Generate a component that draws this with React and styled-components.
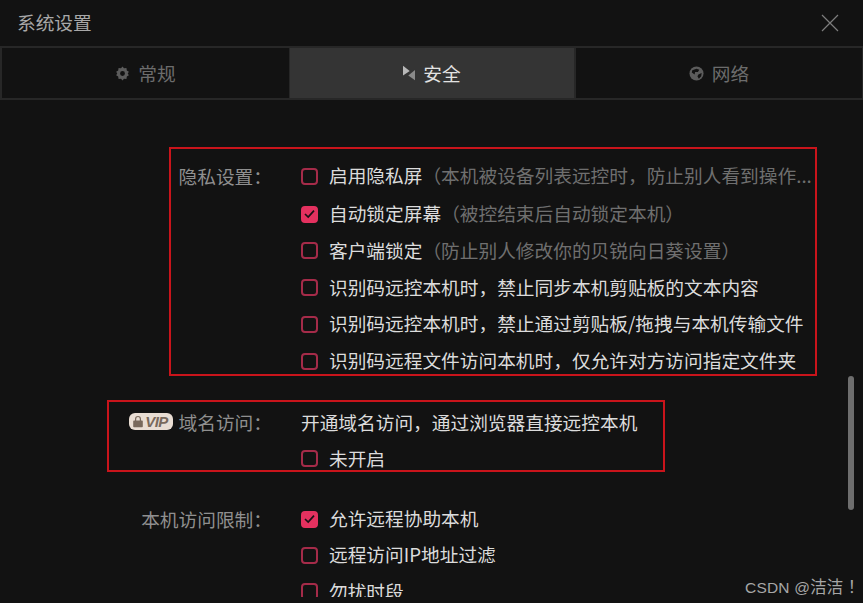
import React from "react";
import styled, { createGlobalStyle } from "styled-components";

const Global = createGlobalStyle`
  html, body { margin: 0; padding: 0; background: #121212; }
  body { font-family: "Noto Sans CJK SC", "Liberation Sans", sans-serif; }
`;
const Page = styled.div`
  position: relative; width: 863px; height: 603px; overflow: hidden; background: #121212;
  font-size: 18.7px; line-height: 26px; color: #d6d6d6;
`;
const Header = styled.header`
  display: flex; align-items: center; justify-content: space-between;
  height: 46px; padding: 0 24px 0 17px; box-sizing: border-box;
`;
const Title = styled.h1`
  margin: 0; font-size: 18.7px; font-weight: 400; color: #a8a8a8; line-height: 26px; position: relative; top: -1px;
`;
const CloseIcon = styled.svg`
  width: 18px; height: 18px; display: block;
`;
const Tabs = styled.nav`
  display: grid; grid-template-columns: 287px 287px 1fr;
  height: 54px; box-sizing: border-box; border: 2px solid #272727;
  border-right-width: 1px;
`;
const Tab = styled.div`
  display: flex; align-items: center; justify-content: center; gap: 8px;
  background: ${p => (p.$active ? "#343434" : "#121212")};
  color: ${p => (p.$active ? "#e2e2e2" : "#6c6c6c")};
  border-left: ${p => (p.$active ? "1px solid #272727" : "none")};
  border-right: ${p => (p.$active ? "2px solid #272727" : "none")};
  svg { display: block; }
`;
const Content = styled.main`
  display: flex; flex-direction: column; padding-top: 47px; align-items: flex-start;
  height: 497px; box-sizing: border-box; overflow: hidden;
`;
const Section = styled.section`
  flex: none;
  display: grid; grid-template-columns: ${p => p.$labelWidth}px 1fr; box-sizing: border-box;
  margin-left: ${p => p.$left}px; width: ${p => p.$width}px; height: ${p => p.$height}px;
  padding-top: ${p => p.$pad}px; margin-bottom: ${p => p.$gap || 0}px;
  border: 2px solid ${p => (p.$marked ? "#c9141b" : "transparent")};
`;
const Label = styled.div`
  display: flex; align-items: center; justify-content: flex-end; gap: 6px; height: 26px;
  padding-right: 29px;
  color: #8f8f8f; white-space: nowrap;
`;
const Rows = styled.div`
  display: flex; flex-direction: column;
`;
const Row = styled.div`
  display: flex; align-items: center; height: 26px; margin-bottom: ${p => p.$mb ?? 10.8}px;
  white-space: nowrap;
`;
const Box = styled.span`
  flex: none; width: 17px; height: 17px; box-sizing: border-box; border-radius: 4px;
  border: 2px solid ${p => (p.$checked ? "#e4315f" : "#a52b49")}; margin-right: 11px;
  background: ${p => (p.$checked ? "#e4315f" : "transparent")};
  display: flex; align-items: center; justify-content: center;
`;
const RowBody = styled.span`
  position: relative; top: -1px; display: block;
`;
const RowText = styled.span`
  color: #dcdcdc;
`;
const Hint = styled.span`
  color: #6f6f6f;
`;
const Plain = styled.div`
  height: 26px; margin-bottom: 10.5px; color: #dcdcdc; white-space: nowrap;
`;
const VipBadge = styled.span`
  display: inline-flex; align-items: center; justify-content: center; gap: 2px;
  width: 44px; height: 17px; border-radius: 6px; background: #e9ddd3; color: #79695c;
  font: italic 700 15px/17px "Liberation Sans", sans-serif; letter-spacing: -0.6px;
  position: relative; top: -1px;
`;
const Scrollbar = styled.div`
  position: absolute; left: 848px; top: 376px; width: 6px; height: 134px; border-radius: 3px; background: #6e6e6e;
`;
const Watermark = styled.div`
  position: absolute; left: 745px; top: 575px; font-size: 15.5px; line-height: 24px; color: #a6a6a6;
  font-family: "Liberation Sans", "Noto Sans CJK SC", sans-serif; white-space: nowrap; letter-spacing: 0.2px;
`;
const WatermarkCjk = styled.span`
  font-size: 16.5px; letter-spacing: 0;
`;

const Check = () => (
  <svg width="11" height="10" viewBox="0 0 11 10" fill="none">
    <path d="M1 5 L4.2 8 L10 1.6" stroke="#1a1015" strokeWidth="1.7" />
  </svg>
);
const CheckRow = ({ checked, text, hint, mb }) => (
  <Row $mb={mb}>
    <Box $checked={checked}>{checked && <Check />}</Box>
    <RowBody>
      <RowText>{text}</RowText>
      {hint && <Hint>{hint}</Hint>}
    </RowBody>
  </Row>
);

const Gear = () => (
  <svg width="15" height="15" viewBox="0 0 16 16" fill="#5c5c5c">
    <path fillRule="evenodd" d="M8 .5l1.6 1.9 2.6-.2.4 2.5 2.2 1.4L13.6 8l1.2 1.9-2.2 1.4-.4 2.5-2.6-.2L8 15.5l-1.6-1.9-2.6.2-.4-2.5-2.2-1.4L2.4 8 1.2 6.1l2.2-1.4.4-2.5 2.6.2zM8 5.4a2.6 2.6 0 100 5.2 2.6 2.6 0 000-5.2z" />
  </svg>
);
const Shield = () => (
  <svg width="12" height="16" viewBox="0 0 12.5 16">
    <path d="M0 0.5 L7 6 L0 10.5z" fill="#b8b8b8" />
    <path d="M12.5 5 L12.5 15.5 L5.5 10.5z" fill="#8a8a8a" />
  </svg>
);
const Globe = () => (
  <svg width="15" height="15" viewBox="0 0 16 16">
    <circle cx="8" cy="8" r="7.5" fill="#5c5c5c" />
    <path d="M3.5 4.5 L8 2.8 L11 4 L9.5 6.5 L6.5 6.5 L6 9 L3 7z M10 9 L13.5 7.5 L13 11 L10.5 13.5 L9 11z" fill="#121212" />
  </svg>
);
const Lock = () => (
  <svg width="10" height="13" viewBox="0 0 10 12" fill="#79695c">
    <path fillRule="evenodd" d="M1 5h1V3.4a3 3 0 016 0V5h1a.8.8 0 01.8.8v5.2a.8.8 0 01-.8.8H1a.8.8 0 01-.8-.8V5.8A.8.8 0 011 5zm2.2 0h3.6V3.4a1.8 1.8 0 00-3.6 0z" />
  </svg>
);

export default function App() {
  return (
    <Page>
      <Global />
      <Header>
        <Title>系统设置</Title>
        <CloseIcon viewBox="0 0 18 18" fill="none">
          <path d="M1 1 L17 17 M17 1 L1 17" stroke="#7d7d7d" strokeWidth="1.2" />
        </CloseIcon>
      </Header>
      <Tabs>
        <Tab><Gear />常规</Tab>
        <Tab $active><Shield />安全</Tab>
        <Tab><Globe />网络</Tab>
      </Tabs>
      <Content>
        <Section $marked $left={169} $width={648} $height={229} $labelWidth={130} $pad={14} $gap={24}>
          <Label>隐私设置：</Label>
          <Rows>
            <CheckRow mb={12} text="启用隐私屏" hint="（本机被设备列表远控时，防止别人看到操作..." />
            <CheckRow checked text="自动锁定屏幕" hint="（被控结束后自动锁定本机）" />
            <CheckRow text="客户端锁定" hint="（防止别人修改你的贝锐向日葵设置）" />
            <CheckRow text="识别码远控本机时，禁止同步本机剪贴板的文本内容" />
            <CheckRow text="识别码远控本机时，禁止通过剪贴板/拖拽与本机传输文件" />
            <CheckRow text="识别码远程文件访问本机时，仅允许对方访问指定文件夹" />
          </Rows>
        </Section>
        <Section $marked $left={107} $width={558} $height={72} $labelWidth={192} $pad={7} $gap={32}>
          <Label><VipBadge><Lock />VIP</VipBadge>域名访问：</Label>
          <Rows>
            <Plain>开通域名访问，通过浏览器直接远控本机</Plain>
            <CheckRow text="未开启" mb={0} />
          </Rows>
        </Section>
        <Section $left={107} $width={720} $height={125} $labelWidth={192} $pad={0}>
          <Label>本机访问限制：</Label>
          <Rows>
            <CheckRow checked mb={10.4} text="允许远程协助本机" />
            <CheckRow mb={10.4} text="远程访问IP地址过滤" />
            <CheckRow text="勿扰时段" />
          </Rows>
        </Section>
      </Content>
      <Scrollbar />
      <Watermark>CSDN @<WatermarkCjk>洁洁 ！</WatermarkCjk></Watermark>
    </Page>
  );
}
